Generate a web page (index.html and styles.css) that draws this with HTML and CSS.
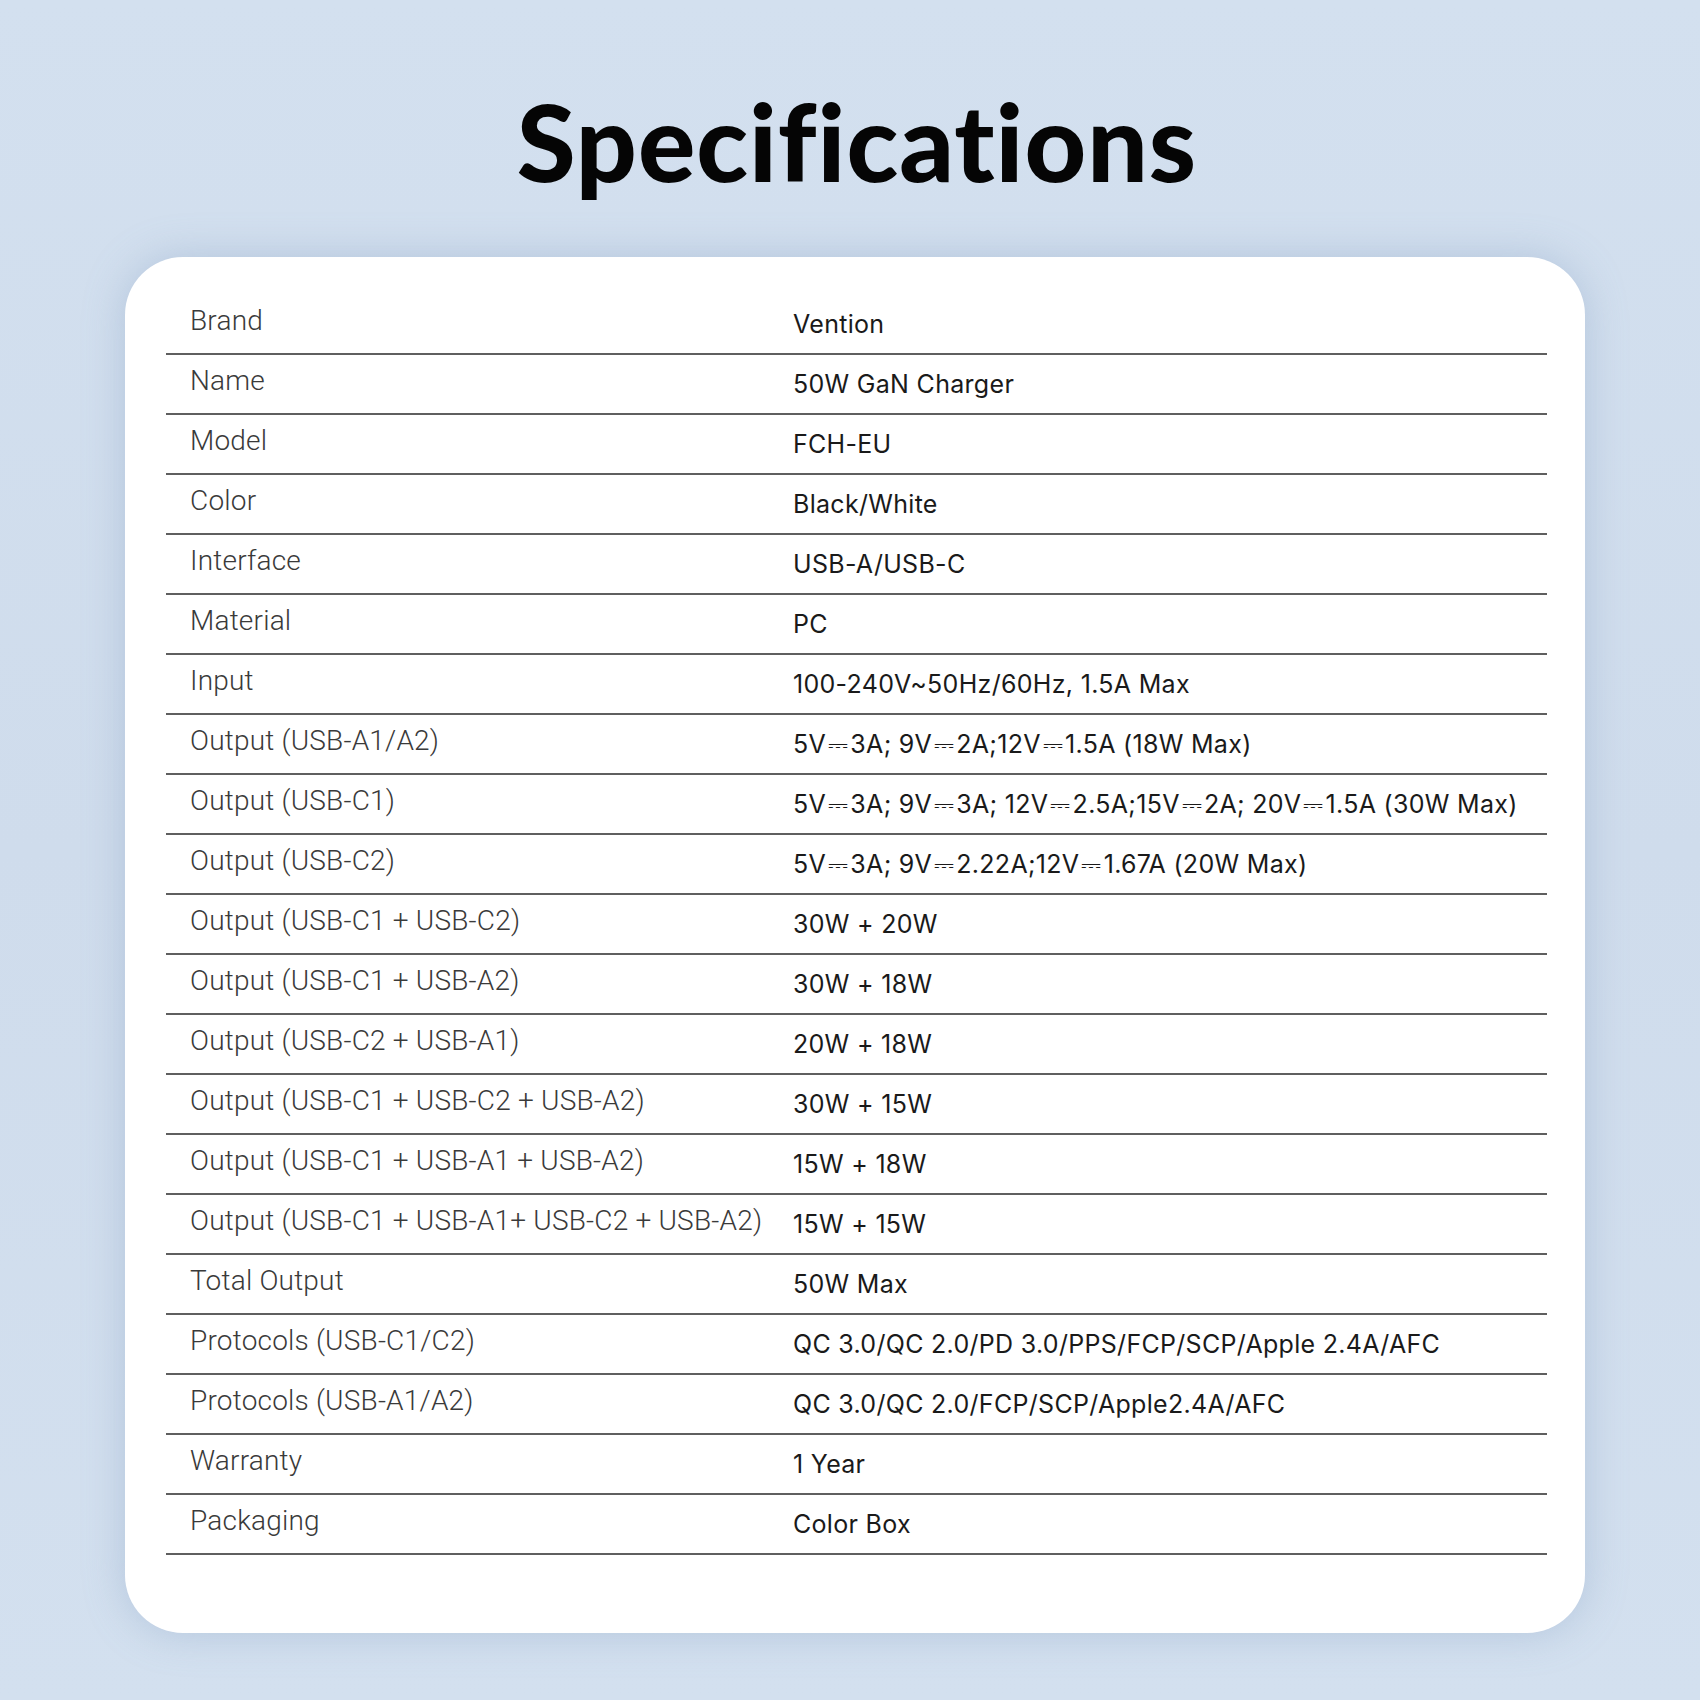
FILE: index.html
```html
<!DOCTYPE html>
<html>
<head>
<meta charset="utf-8">
<link rel="stylesheet" href="styles.css">
</head>
<body>
<div class="page">
  <h1 class="title">Specifications</h1>
  <div class="card">
    <div class="table">
      <div class="row"><div class="label">Brand</div><div class="value">Vention</div></div>
      <div class="row"><div class="label">Name</div><div class="value">50W GaN Charger</div></div>
      <div class="row"><div class="label">Model</div><div class="value">FCH-EU</div></div>
      <div class="row"><div class="label">Color</div><div class="value">Black/White</div></div>
      <div class="row"><div class="label">Interface</div><div class="value">USB-A/USB-C</div></div>
      <div class="row"><div class="label">Material</div><div class="value">PC</div></div>
      <div class="row"><div class="label">Input</div><div class="value">100-240V~50Hz/60Hz, 1.5A Max</div></div>
      <div class="row"><div class="label">Output (USB-A1/A2)</div><div class="value">5V<span class="dc">⎓</span>3A; 9V<span class="dc">⎓</span>2A;12V<span class="dc">⎓</span>1.5A (18W Max)</div></div>
      <div class="row"><div class="label">Output (USB-C1)</div><div class="value">5V<span class="dc">⎓</span>3A; 9V<span class="dc">⎓</span>3A; 12V<span class="dc">⎓</span>2.5A;15V<span class="dc">⎓</span>2A; 20V<span class="dc">⎓</span>1.5A (30W Max)</div></div>
      <div class="row"><div class="label">Output (USB-C2)</div><div class="value">5V<span class="dc">⎓</span>3A; 9V<span class="dc">⎓</span>2.22A;12V<span class="dc">⎓</span>1.67A (20W Max)</div></div>
      <div class="row"><div class="label">Output (USB-C1 + USB-C2)</div><div class="value">30W + 20W</div></div>
      <div class="row"><div class="label">Output (USB-C1 + USB-A2)</div><div class="value">30W + 18W</div></div>
      <div class="row"><div class="label">Output (USB-C2 + USB-A1)</div><div class="value">20W + 18W</div></div>
      <div class="row"><div class="label">Output (USB-C1 + USB-C2 + USB-A2)</div><div class="value">30W + 15W</div></div>
      <div class="row"><div class="label">Output (USB-C1 + USB-A1 + USB-A2)</div><div class="value">15W + 18W</div></div>
      <div class="row"><div class="label">Output (USB-C1 + USB-A1+ USB-C2 + USB-A2)</div><div class="value">15W + 15W</div></div>
      <div class="row"><div class="label">Total Output</div><div class="value">50W Max</div></div>
      <div class="row"><div class="label">Protocols (USB-C1/C2)</div><div class="value">QC 3.0/QC 2.0/PD 3.0/PPS/FCP/SCP/Apple 2.4A/AFC</div></div>
      <div class="row"><div class="label">Protocols (USB-A1/A2)</div><div class="value">QC 3.0/QC 2.0/FCP/SCP/Apple2.4A/AFC</div></div>
      <div class="row"><div class="label">Warranty</div><div class="value">1 Year</div></div>
      <div class="row"><div class="label">Packaging</div><div class="value">Color Box</div></div>
    </div>
  </div>
</div>
</body>
</html>
```
FILE: styles.css
```css
html, body {
  margin: 0;
  padding: 0;
}
body {
  width: 1700px;
  height: 1700px;
  background: linear-gradient(180deg, #d3e0ef 0%, #cfdcec 50%, #d3e0ef 100%);
  font-family: "Noto Sans", "DejaVu Sans", sans-serif;
  overflow: hidden;
}
.page {
  display: flex;
  flex-direction: column;
  align-items: center;
  padding-top: 86px;
}
.title {
  margin: 0 0 0 14px;
  font-family: "Lato", sans-serif;
  font-weight: 900;
  font-size: 107px;
  line-height: 110px;
  letter-spacing: 1px;
  color: #050505;
  height: 110px;
}
.card {
  margin-top: 61px;
  margin-left: 10px;
  width: 1460px;
  height: 1376px;
  box-sizing: border-box;
  background: #ffffff;
  border-radius: 58px;
  box-shadow: 0 0 40px rgba(120, 150, 185, 0.35);
  padding: 38px 38px 0 41px;
}
.row {
  display: grid;
  grid-template-columns: 627px 1fr;
  height: 60px;
  box-sizing: border-box;
  border-bottom: 2px solid #5f5f5f;
}
.label {
  padding-left: 24px;
  font-family: "Roboto", sans-serif;
  font-weight: 300;
  font-size: 28px;
  line-height: 28px;
  letter-spacing: 0.2px;
  padding-top: 12px;
  color: #3a3a3a;
  white-space: nowrap;
}
.value {
  font-family: "Inter", "DejaVu Sans", sans-serif;
  font-weight: 400;
  font-size: 25px;
  line-height: 25px;
  letter-spacing: 0.3px;
  padding-top: 17px;
  color: #1a1a1a;
  white-space: nowrap;
}
.dc {
  display: inline-block;
  margin: 0 2px;
}
```
